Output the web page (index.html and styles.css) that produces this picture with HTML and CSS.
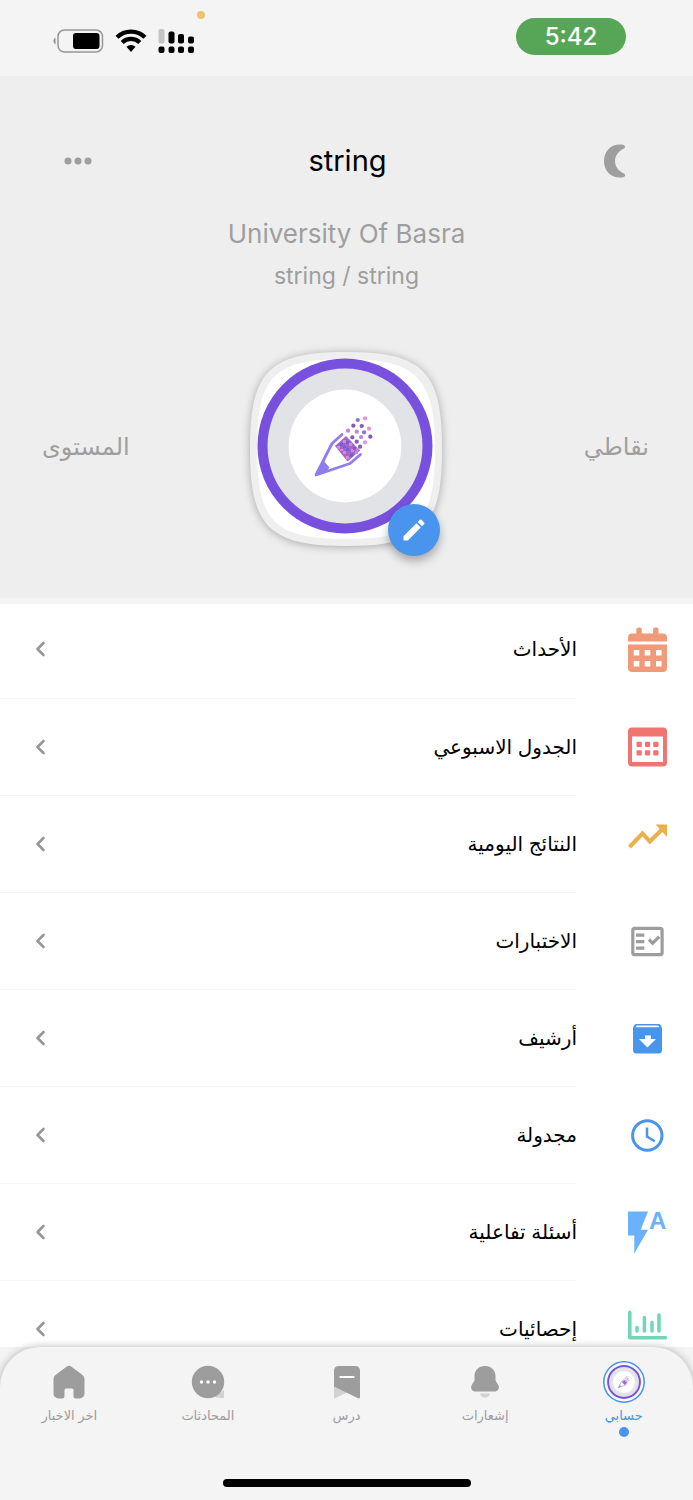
FILE: index.html
```html
<!DOCTYPE html>
<html lang="ar" dir="rtl">
<head>
<meta charset="utf-8">
<meta name="viewport" content="width=device-width, initial-scale=1">
<title>حسابي</title>
<link rel="stylesheet" href="styles.css">
</head>
<body>
<svg class="defs" aria-hidden="true">
  <symbol id="emblem" viewBox="257 358 176 176">
    <circle cx="345" cy="446" r="87.500" fill="#7850de"/>
    <circle cx="345" cy="446" r="77.500" fill="#e2e3e6"/>
    <circle cx="345" cy="446" r="56.400" fill="#fff"/>
    <path d="M342 434.500L332 443.500L316 475L350 463.500L360.500 454.500" fill="none" stroke="#8f7df0" stroke-width="2.800" stroke-linecap="round" stroke-linejoin="round"/>
    <path d="M315.500 476L323.300 460.500L329.500 467.500L326 472.500Z" fill="#8f7df0"/>
    <path d="M335 446L346 436L360 450.500L347.500 461.500Z" fill="#a066cf"/>
    <path d="M337 446h3v3h-3zM343 440h3v3h-3zM349 443h3v3h-3zM343 451h3v3h-3zM346 456h3v3h-3zM351 449h3v3h-3zM355 451h3v3h-3zM340 449h3v2h-3z" fill="#dd86d2"/>
    <path d="M340 443h3v3h-3zM346 441h3v3h-3zM346 448h3v3h-3zM350 454h3v3h-3zM353 447h3v3h-3zM343 446h3v2h-3z" fill="#765fca"/>
    <g fill="none" stroke-width="4.200" stroke-linecap="round">
      <path stroke="#8c75d8" d="M357.700 420h.1M364 432.300h.1"/>
      <path stroke="#e096dc" d="M365 418.300h.1M369 428.700h.1M365 442.300h.1"/>
      <path stroke="#865bb5" d="M353.300 425.700h.1M361.700 426h.1M370.300 436.700h.1M352.300 437.300h.1M356.700 441.700h.1M360 446.700h.1"/>
      <path stroke="#c283d9" d="M348 430.700h.1M356.700 431.700h.1M361 437h.1M357.500 450h.1"/>
    </g>
  </symbol>
  <symbol id="chevron" viewBox="0 0 12 18">
    <path d="M9.500 3L3.500 9L9.500 15" fill="none" stroke="#979797" stroke-width="2.600" stroke-linecap="round" stroke-linejoin="round"/>
  </symbol>
</svg>

<div class="app">
  <header class="status">
    <div class="status-icons">
      <svg width="150" height="46" viewBox="50 8 150 46" aria-hidden="true">
        <path d="M55.500 37.500a4 4 0 0 0 0 7z" fill="#8e8e8e"/>
        <rect x="58" y="30" width="44.500" height="22" rx="6.500" fill="none" stroke="#979797" stroke-width="1.500"/>
        <rect x="73" y="33" width="26.500" height="16" rx="3"/>
        <g fill="none" stroke="#000" stroke-width="4.200">
          <path d="M117 37.300a20 20 0 0 1 28 0"/>
          <path d="M122.200 42.500a12.600 12.600 0 0 1 17.600 0"/>
        </g>
        <path d="M126.500 46.800a6.700 6.700 0 0 1 9 0L131 52z"/>
        <rect x="158.500" y="29" width="6" height="14.500" rx="2" fill="#c4c4c4"/>
        <rect x="168.500" y="31.500" width="6" height="12" rx="2"/>
        <rect x="178" y="34" width="6" height="9.500" rx="2"/>
        <rect x="188" y="36.500" width="6" height="7" rx="2"/>
        <path d="M160.500 46.500h2a2 2 0 0 1 2 2v2.500a2 2 0 0 1-2 2h-2a2 2 0 0 1-2-2v-2.500a2 2 0 0 1 2-2zM170.500 46.500h2a2 2 0 0 1 2 2v2.500a2 2 0 0 1-2 2h-2a2 2 0 0 1-2-2v-2.500a2 2 0 0 1 2-2zM180 46.500h2a2 2 0 0 1 2 2v2.500a2 2 0 0 1-2 2h-2a2 2 0 0 1-2-2v-2.500a2 2 0 0 1 2-2zM190 46.500h2a2 2 0 0 1 2 2v2.500a2 2 0 0 1-2 2h-2a2 2 0 0 1-2-2v-2.500a2 2 0 0 1 2-2z"/>
      </svg>
      <span class="mic-dot"></span>
    </div>
    <time class="clock">5:42</time>
  </header>

  <main class="content">
    <section class="profile">
      <div class="profile-bar">
        <button class="icon-button" type="button" aria-label="الوضع الليلي">
          <svg width="24" height="34" viewBox="0 0 24 34"><path d="M17 .5C7 .5 1 8 1 17s6 16.500 16 16.500c2 0 4-.3 4.800-1.300.7-1 .2-2-.8-2.600C15.500 27 12 22.500 12 17s3.500-10 9-12.600c1-.6 1.500-1.600.8-2.600C21 .8 19 .5 17 .5z" fill="#9e9e9e"/></svg>
        </button>
        <h1 class="name">string</h1>
        <button class="icon-button" type="button" aria-label="المزيد">
          <svg width="28" height="8" viewBox="0 0 28 8" fill="#9e9e9e"><circle cx="4" cy="4" r="3.500"/><circle cx="14" cy="4" r="3.500"/><circle cx="24" cy="4" r="3.500"/></svg>
        </button>
      </div>
      <p class="university">University Of Basra</p>
      <p class="department" dir="ltr">string / string</p>
      <div class="stats">
        <span class="stat">نقاطي</span>
        <div class="avatar">
          <svg class="avatar-picture" width="192" height="194" viewBox="250 352 192 194" role="img" aria-label="الصورة الشخصية">
            <path d="M250 449C250 372 268 352 346 352S442 372 442 449S424 546 346 546S250 526 250 449z" fill="#efefef"/>
            <path d="M257 447C257 377 274 359 345 359S435 377 435 449S419 539 346 539S257 521 257 447z" fill="#fff"/>
            <use href="#emblem" x="257" y="358" width="176" height="176"/>
          </svg>
          <button class="edit" type="button" aria-label="تعديل الصورة">
            <svg width="28" height="28" viewBox="0 0 24 24"><path fill="#fff" d="M3 17.250V21h3.750L17.810 9.940l-3.750-3.750L3 17.250zM20.710 7.040a1 1 0 0 0 0-1.410l-2.340-2.340a1 1 0 0 0-1.410 0l-1.830 1.830 3.750 3.750 1.830-1.830z"/></svg>
          </button>
        </div>
        <span class="stat stat-end">المستوى</span>
      </div>
    </section>

    <nav class="menu" aria-label="القائمة">
      <a class="row" href="#events">
        <svg class="row-icon" viewBox="0 0 40 48" fill="#f19a79"><rect x="9.300" y="1.500" width="5.500" height="9" rx="2"/><rect x="26" y="1.500" width="5.500" height="9" rx="2"/><path d="M5 7.500h31a4 4 0 0 1 4 4v4H1v-4a4 4 0 0 1 4-4z"/><path d="M1 18.500h39V42a4 4 0 0 1-4 4H5a4 4 0 0 1-4-4z"/><path fill="#fff" d="M6.700 24h5.600v5.600H6.700zM17.700 24h5.600v5.600h-5.600zM29 24h5.600v5.600H29zM6.700 35h5.600v5.600H6.700zM17.700 35h5.600v5.600h-5.600zM29 35h5.600v5.600H29z"/></svg>
        <span class="row-body">الأحداث<svg class="chevron"><use href="#chevron"/></svg></span>
      </a>
      <a class="row" href="#schedule">
        <svg class="row-icon" viewBox="0 0 40 48" fill="#f07470"><rect x="1" y="3.500" width="39" height="39" rx="4"/><path fill="#fff" d="M5 12.500h31V38H5z"/><rect x="9.500" y="17.700" width="5.300" height="5.300" rx="1"/><rect x="17.900" y="17.700" width="5.300" height="5.300" rx="1"/><rect x="26.200" y="17.700" width="5.300" height="5.300" rx="1"/><rect x="9.500" y="26.200" width="5.300" height="5.300" rx="1"/><rect x="17.900" y="26.200" width="5.300" height="5.300" rx="1"/><rect x="26.200" y="26.200" width="5.300" height="5.300" rx="1"/></svg>
        <span class="row-body">الجدول الاسبوعي<svg class="chevron"><use href="#chevron"/></svg></span>
      </a>
      <a class="row" href="#results">
        <svg class="row-icon" viewBox="0 0 40 48"><path d="M2.500 26L15.500 12.500L22.800 20.500L35 8.500" fill="none" stroke="#eab04a" stroke-width="4"/><path d="M28.500 3.500H40V16z" fill="#eab04a"/></svg>
        <span class="row-body">النتائج اليومية<svg class="chevron"><use href="#chevron"/></svg></span>
      </a>
      <a class="row" href="#exams">
        <svg class="row-icon" viewBox="0 0 40 48" fill="none" stroke="#9d9d9d" stroke-width="3.200"><rect x="5.800" y="10.400" width="29.300" height="26.300" rx="2"/><path d="M9 17.200h8.300M9 23.700h8.300M9 30.200h8.300M22 21.500l3.700 3.700 6.500-6.500"/></svg>
        <span class="row-body">الاختبارات<svg class="chevron"><use href="#chevron"/></svg></span>
      </a>
      <a class="row" href="#archive">
        <svg class="row-icon" viewBox="0 0 40 48" fill="#4994ec"><path d="M9.500 9h22c1 0 1.500.3 2 1l1.500 2.500V35a3.500 3.500 0 0 1-3.500 3.500h-22A3.500 3.500 0 0 1 6 35V12.500L7.500 10c.5-.7 1-1 2-1z"/><path fill="#fff" d="M9.800 10.500h21.400l1.200 1.800H8.600zM18 20.500h6V24h5l-8.600 8.500L12 24h6z"/></svg>
        <span class="row-body">أرشيف<svg class="chevron"><use href="#chevron"/></svg></span>
      </a>
      <a class="row" href="#scheduled">
        <svg class="row-icon" viewBox="0 0 40 48" fill="none" stroke="#4994ec"><circle cx="20.300" cy="23.500" r="14.700" stroke-width="3"/><path d="M20 15.500v9l7.700 4.700" stroke-width="2.500"/></svg>
        <span class="row-body">مجدولة<svg class="chevron"><use href="#chevron"/></svg></span>
      </a>
      <a class="row" href="#interactive">
        <svg class="row-icon" viewBox="0 0 40 48" fill="#6ab2fb"><path d="M1 2.500h20l-7.300 18.300H21L7.300 44.500v-18H1z"/><text class="flash-letter" direction="ltr" x="22" y="20">A</text></svg>
        <span class="row-body">أسئلة تفاعلية<svg class="chevron"><use href="#chevron"/></svg></span>
      </a>
      <a class="row" href="#statistics">
        <svg class="row-icon" viewBox="0 0 40 48" fill="none" stroke="#70d6b6" stroke-width="3.500" stroke-linecap="round"><path stroke-linejoin="round" d="M2.800 6.200V31.700H38.500M10 21.500V25M17.400 11.500V25M25 16.500V25M32 9V25"/></svg>
        <span class="row-body">إحصائيات<svg class="chevron"><use href="#chevron"/></svg></span>
      </a>
    </nav>
  </main>

  <footer class="dock">
    <nav class="tabs" aria-label="التنقل">
      <a class="tab tab-active" href="#account" aria-current="page">
        <span class="tab-icon"><svg class="tab-avatar" width="42" height="42" viewBox="0 0 42 42"><circle cx="21" cy="21" r="20.200" fill="#f9f9fb" stroke="#4994ec" stroke-width="1.500"/><use href="#emblem" x="4" y="4" width="34" height="34"/></svg></span>
        <span>حسابي</span>
      </a>
      <a class="tab" href="#notifications">
        <span class="tab-icon"><svg width="34" height="34" viewBox="0 0 34 34"><path d="M12.300 28.500h9.400c0 2.500-2 4-4.700 4s-4.700-1.500-4.700-4z" fill="#d2d2d2"/><path d="M17 1C10.500 1 6.500 5.500 6.500 11v4.500L3.700 20c-1.700 4 .5 6.500 4.300 6.500h18c3.800 0 6-2.500 4.300-6.500l-2.800-4.500V11C27.500 5.500 23.500 1 17 1z" fill="#9d9d9d"/></svg></span>
        <span>إشعارات</span>
      </a>
      <a class="tab" href="#lesson">
        <span class="tab-icon"><svg width="34" height="34" viewBox="0 0 34 34"><path d="M4 20v12c0 1 .7 1.500 1.700 1L20 26z" fill="#d2d2d2"/><path d="M8.500 1h17A4.500 4.500 0 0 1 30 5.500V32c0 1.200-.8 1.700-1.900 1.200L4 21.500v-16A4.500 4.500 0 0 1 8.500 1z" fill="#9d9d9d"/><path d="M10.500 12h13" stroke="#fff" stroke-width="2.200" stroke-linecap="round"/></svg></span>
        <span>درس</span>
      </a>
      <a class="tab" href="#chats">
        <span class="tab-icon"><svg width="34" height="34" viewBox="0 0 34 34"><path d="M33 25v7c0 1-.5 1.500-1.500 1.300L23 32z" fill="#d2d2d2"/><circle cx="17" cy="17" r="16.200" fill="#9d9d9d"/><g fill="#fff"><circle cx="10.500" cy="17" r="1.700"/><circle cx="17" cy="17" r="1.700"/><circle cx="23.500" cy="17" r="1.700"/></g></svg></span>
        <span>المحادثات</span>
      </a>
      <a class="tab" href="#news">
        <span class="tab-icon"><svg width="34" height="34" viewBox="0 0 34 34"><path d="M14.500 1.700a4 4 0 0 1 5 0l11 8.300a5 5 0 0 1 2 4v14.500a5 5 0 0 1-5 5H24a2.500 2.500 0 0 1-2.500-2.500v-6a1.500 1.500 0 0 0-1.500-1.500h-6a1.500 1.500 0 0 0-1.500 1.500v6a2.500 2.500 0 0 1-2.500 2.500H6.500a5 5 0 0 1-5-5V14a5 5 0 0 1 2-4z" fill="#9d9d9d"/></svg></span>
        <span>اخر الاخبار</span>
      </a>
    </nav>
    <div class="home-indicator"></div>
  </footer>
</div>
</body>
</html>
```
FILE: styles.css
```css
* { box-sizing: border-box; }

body {
  margin: 0;
  background: #f4f4f4;
  color: #000;
  font-family: Inter, "DejaVu Sans", sans-serif;
}

h1, p { margin: 0; font-weight: 400; }

a { color: inherit; text-decoration: none; }

button {
  display: flex;
  align-items: center;
  justify-content: center;
  padding: 0;
  border: 0;
  background: none;
  cursor: pointer;
}

svg { display: block; flex: none; }

.defs { position: absolute; width: 0; height: 0; }

.app {
  display: flex;
  flex-direction: column;
  height: 100vh;
}

.status {
  display: flex;
  flex: none;
  flex-direction: row-reverse;
  align-items: flex-start;
  justify-content: space-between;
  height: 76px;
  padding: 8px 67px 0 50px;
}

.status-icons { position: relative; }

.mic-dot {
  position: absolute;
  top: 3px;
  right: -5px;
  width: 8px;
  height: 8px;
  border-radius: 50%;
  background: #f4bf70;
}

.clock {
  width: 110px;
  margin-top: 10px;
  border-radius: 19px;
  background: #57a557;
  color: #fff;
  font-size: 24px;
  font-weight: 500;
  line-height: 37px;
  text-align: center;
}

.content {
  flex: 1;
  min-height: 0;
  overflow-y: auto;
  scrollbar-width: none;
}

.profile {
  padding: 64px 0 52px;
  background: #eee;
  text-align: center;
}

.profile-bar {
  display: flex;
  align-items: center;
  justify-content: space-between;
  padding: 0 66px 0 64px;
}

.icon-button { height: 42px; }

.name { font-size: 29px; line-height: 42px; }

.university {
  margin-top: 32px;
  color: #9e9e9e;
  font-size: 26px;
  line-height: 40px;
}

.department {
  margin-top: 3px;
  color: #9e9e9e;
  font-size: 23px;
  line-height: 38px;
}

.stats {
  display: grid;
  grid-template-columns: 1fr auto 1fr;
  align-items: center;
  margin-top: 57px;
  padding: 0 44px 0 42px;
}

.stat {
  padding-bottom: 4px;
  color: #9e9e9e;
  font-size: 24px;
  line-height: 40px;
  text-align: start;
}

.stat-end { text-align: end; }

.avatar { position: relative; }

.avatar-picture { filter: drop-shadow(0 1px 4px rgba(0, 0, 0, .3)); }

.edit {
  position: absolute;
  right: 2px;
  bottom: -10px;
  width: 52px;
  height: 52px;
  border-radius: 50%;
  background: #4994ec;
  box-shadow: 0 5px 10px rgba(0, 0, 0, .3);
}

.menu {
  margin-top: 6px;
  background: #fff;
}

.row {
  display: flex;
  align-items: center;
  gap: 50px;
  height: 97px;
  padding-right: 26px;
}

.row-icon { width: 40px; height: 48px; overflow: visible; }

.flash-letter { font: bold 24px/1 "Liberation Sans", sans-serif; }

.row-body {
  display: flex;
  flex: 1;
  align-items: center;
  justify-content: space-between;
  height: 100%;
  padding-left: 34px;
  border-bottom: 1px solid #f5f5f5;
  font-size: 20px;
}

.row:first-child { height: 95px; }

.row:first-child .row-icon { margin-bottom: 4px; }

.row:first-child .row-body { padding-bottom: 4px; }

.chevron { width: 12px; height: 18px; }

.dock {
  position: relative;
  flex: none;
  padding: 13px 0;
  border-radius: 40px 40px 0 0;
  background: #f4f4f4;
  box-shadow: 0 0 8px rgba(0, 0, 0, .28);
}

.tabs {
  display: grid;
  grid-template-columns: repeat(5, 1fr);
}

.tab {
  display: flex;
  flex-direction: column;
  align-items: center;
  height: 78px;
  color: #9d9d9d;
  font-size: 13px;
  line-height: 23px;
}

.tab-icon {
  display: grid;
  place-items: center;
  height: 44px;
}

.tab-active { color: #4994ec; }

.tab-active::after {
  content: "";
  width: 10px;
  height: 10px;
  border-radius: 50%;
  background: #4994ec;
}

.home-indicator {
  width: 248px;
  height: 8px;
  margin: 41px auto 0;
  border-radius: 4px;
  background: #000;
}
```
